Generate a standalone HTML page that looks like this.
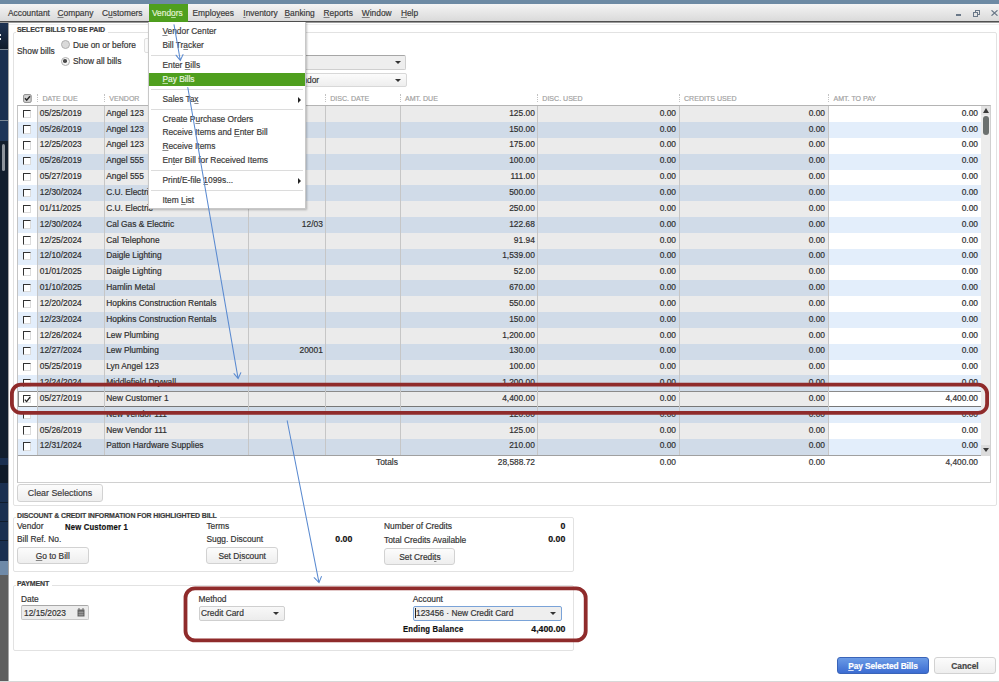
<!DOCTYPE html>
<html><head><meta charset="utf-8">
<style>
*{margin:0;padding:0;box-sizing:border-box;}
html,body{width:999px;height:682px;overflow:hidden;background:#fff;}
body{position:relative;font-family:"Liberation Sans",sans-serif;font-size:8.4px;color:#333;}
span,div{-webkit-text-stroke:0.18px currentColor;}
.a{position:absolute;white-space:nowrap;}
#topband{position:absolute;left:0;top:0;width:999px;height:4px;background:#6d8aa4;}
#menubar{position:absolute;left:0;top:4px;width:999px;height:18px;background:linear-gradient(#f4f4f4,#dadada);border-bottom:1px solid #505050;}
.mi{position:absolute;top:4px;font-size:8.4px;color:#3a3a3a;line-height:10px;white-space:nowrap;}
.u{text-decoration:underline;text-underline-offset:1.2px;text-decoration-thickness:0.5px;text-decoration-color:rgba(60,60,60,0.6);}
#side{position:absolute;left:0;top:23px;width:8.4px;overflow:hidden;height:659px;background:#1b3050;}
.seg{position:absolute;left:0;width:9px;}
.gbox{position:absolute;border:1px solid #e2e2e2;border-radius:2px;}
.legend{position:absolute;font-weight:bold;font-size:7px;color:#3c3c3c;background:#fff;padding:0 3px 0 1px;line-height:9px;white-space:nowrap;letter-spacing:-0.14px;}
#table{position:absolute;left:17px;top:105px;width:974px;height:377.5px;border-top:1px solid #b4b4b4;border-left:1px solid #c4c4c4;border-right:1px solid #d0d0d0;border-bottom:1px solid #d0d0d0;background:#fff;overflow:hidden;}
.row{position:absolute;left:0;width:974px;height:15.84px;}
.row .c{position:absolute;top:0;height:100%;}
.t{position:absolute;top:1.6px;line-height:10px;white-space:nowrap;color:#2e2e2e;}
.t.r{text-align:right;}
.cb{position:absolute;left:5px;top:3.4px;width:8px;height:8.3px;border-top:1.8px solid #333;border-left:1.8px solid #333;border-right:1px solid #dcdcdc;border-bottom:1px solid #dcdcdc;background:#fff;}
.vl{position:absolute;top:0;width:1px;height:349px;background:#c6c6c6;}
.hd{position:absolute;top:94.2px;font-size:7.05px;color:#a2a2a2;line-height:9px;white-space:nowrap;}
.hsep{position:absolute;top:94.3px;width:1px;height:8px;border-left:1px dotted #c2c2c2;}
.btn{position:absolute;border:1px solid #d2d2d2;border-radius:3px;background:linear-gradient(#fcfcfc,#eeeeee);text-align:center;color:#333;line-height:16.5px;white-space:nowrap;}
.lbl{position:absolute;white-space:nowrap;color:#333;line-height:10px;}
.b{font-weight:bold;color:#111;font-size:8.4px;}
.bs{display:inline-block;transform:scaleX(0.92);transform-origin:0 0;letter-spacing:0.2px;}
.bn{font-size:8.8px;letter-spacing:0;}
#menu{position:absolute;left:148.4px;top:22px;width:158px;height:187px;background:#fff;border:1px solid #c8c8c8;border-top:none;box-shadow:1px 1px 2px rgba(0,0,0,0.25);}
.mitem{position:absolute;left:13px;line-height:10px;color:#3a3a3a;white-space:nowrap;}
.msep{position:absolute;left:2px;width:152px;height:1px;background:#dcdcdc;}
.arr{position:absolute;left:149px;width:0;height:0;border-left:3px solid #222;border-top:3px solid transparent;border-bottom:3px solid transparent;}
.dd{position:absolute;border:1px solid #cfcfcf;border-radius:2px;background:linear-gradient(#f8f8f8,#ececec);}
.ddarr{position:absolute;width:0;height:0;border-top:3.5px solid #333;border-left:3.5px solid transparent;border-right:3.5px solid transparent;}
.radio{position:absolute;width:9px;height:9px;border-radius:50%;border:1px solid #b0b0b0;background:#dadada;}
</style></head><body>
<div id="topband"></div>
<div id="menubar">
  <span class="mi" style="left:8px">Accountant</span>
  <span class="mi" style="left:57.5px"><span class="u">C</span>ompany</span>
  <span class="mi" style="left:102px">C<span class="u">u</span>stomers</span>
  <div style="position:absolute;left:148.7px;top:0;width:39.6px;height:17.5px;background:#4f9f1e"></div>
  <span class="mi" style="left:152px;color:#e3f3d6">Vend<span class="u" style="text-decoration-color:rgba(230,245,220,0.7)">o</span>rs</span>
  <span class="mi" style="left:192.5px">Emplo<span class="u">y</span>ees</span>
  <span class="mi" style="left:243.3px"><span class="u">I</span>nventory</span>
  <span class="mi" style="left:284.5px"><span class="u">B</span>anking</span>
  <span class="mi" style="left:323.5px"><span class="u">R</span>eports</span>
  <span class="mi" style="left:361.8px"><span class="u">W</span>indow</span>
  <span class="mi" style="left:400.9px"><span class="u">H</span>elp</span>
  <div style="position:absolute;left:956px;top:10.4px;width:4.5px;height:1.5px;background:#6a7888"></div>
  <svg style="position:absolute;left:972.5px;top:5.5px" width="7" height="7" viewBox="0 0 7 7"><rect x="2.5" y="0.5" width="4" height="4" fill="none" stroke="#6a7888" stroke-width="1"/><rect x="0.5" y="2.5" width="4" height="4" fill="#e4e4e4" stroke="#6a7888" stroke-width="1"/></svg>
  <svg style="position:absolute;left:991px;top:6px" width="7" height="6" viewBox="0 0 7 6"><path d="M0.5 0.3L6.5 5.7M6.5 0.3L0.5 5.7" stroke="#6a7888" stroke-width="1.2"/></svg>
</div>
<div style="position:absolute;left:0;top:22px;width:999px;height:0.8px;background:#9a9a9a"></div><div style="position:absolute;left:0;top:24px;width:999px;height:1px;background:#f0f0f0"></div>
<div id="side">
<div class="seg" style="top:0.5px;height:25.5px;background:linear-gradient(#1e3353,#0f1b2b)"></div>
<div class="seg" style="top:26px;height:1px;background:#7a8794"></div>
<div class="seg" style="top:27px;height:70px;background:#1b3050"></div>
<div class="seg" style="top:97px;height:1px;background:#7a8794"></div>
<div class="seg" style="top:98px;height:20px;background:#1f3658"></div>
<div class="seg" style="top:118px;height:317px;background:#131f2e"></div>
<div class="seg" style="top:435px;height:7px;background:#1b3050"></div>
<div class="seg" style="top:442px;height:18px;background:#0f1a28"></div>
<div class="seg" style="top:460px;height:19px;background:#1b3050"></div>
<div class="seg" style="top:479px;height:1px;background:#111c2c"></div>
<div class="seg" style="top:480px;height:18px;background:#1b3050"></div>
<div class="seg" style="top:498px;height:1px;background:#111c2c"></div>
<div class="seg" style="top:499px;height:18px;background:#1b3050"></div>
<div class="seg" style="top:517px;height:1px;background:#111c2c"></div>
<div class="seg" style="top:518px;height:20px;background:#1b3050"></div>
<div class="seg" style="top:538px;height:14px;background:#6f8aa8"></div>
<div class="seg" style="top:552px;height:107px;background:#5e5e5e"></div>
<div class="seg" style="left:2px;width:3px;top:121px;height:27px;border-radius:2px;background:#8d949c"></div>
<div class="seg" style="left:0;width:1.3px;top:10.6px;height:2px;background:#e8ecf0"></div>
<div class="seg" style="left:0;width:1.3px;top:15px;height:2px;background:#e8ecf0"></div>
</div>
<div style="position:absolute;left:8.4px;top:23px;width:0.8px;height:658px;background:rgba(0,0,0,0.35)"></div>

<!-- group box 1 -->
<div class="gbox" style="left:13px;top:32px;width:984px;height:474px;"></div>
<span class="legend" style="left:16px;top:25.4px;">SELECT BILLS TO BE PAID</span>
<span class="lbl" style="left:17px;top:46px;">Show bills</span>
<div class="radio" style="left:60.5px;top:40px"></div>
<span class="lbl" style="left:73px;top:39.6px;">Due on or before</span>
<div class="radio" style="left:60.5px;top:56.5px;background:#f4f4f4"><div style="position:absolute;left:1.75px;top:1.75px;width:3.5px;height:3.5px;border-radius:50%;background:#4a4a4a"></div></div>
<span class="lbl" style="left:73px;top:56px;">Show all bills</span>
<div class="dd" style="left:144.2px;top:38.2px;width:80px;height:15.3px;border-color:#e0e0e0;background:#fafafa"></div>
<div class="dd" style="left:230px;top:55.2px;width:176px;height:14.5px;background:#eeeeee;border-color:#cfcfcf;border-top:1.5px solid #a6a6a6"></div>
<div class="ddarr" style="left:394.5px;top:61px"></div>
<div class="dd" style="left:230px;top:73px;width:176.5px;height:14.2px;border-color:#d8d8d8;background:linear-gradient(#fbfbfb,#eeeeee)"></div>
<span class="lbl" style="left:292.6px;top:75px;">Vendor</span>
<div class="ddarr" style="left:394.5px;top:78.5px"></div>

<div class="hsep" style="left:37.0px"></div>
<span class="hd" style="left:42.5px">DATE DUE</span>
<div class="hsep" style="left:103.8px"></div>
<span class="hd" style="left:109.3px">VENDOR</span>
<div class="hsep" style="left:324.7px"></div>
<span class="hd" style="left:330.2px">DISC. DATE</span>
<div class="hsep" style="left:399.5px"></div>
<span class="hd" style="left:405.0px">AMT. DUE</span>
<div class="hsep" style="left:536.8px"></div>
<span class="hd" style="left:542.3px">DISC. USED</span>
<div class="hsep" style="left:678.5px"></div>
<span class="hd" style="left:684.0px">CREDITS USED</span>
<div class="hsep" style="left:828.0px"></div>
<span class="hd" style="left:833.5px">AMT. TO PAY</span>
<svg style="position:absolute;left:23.3px;top:93.7px" width="9" height="9" viewBox="0 0 9 9"><rect x="0.6" y="0.6" width="7.6" height="7.8" rx="1.3" fill="#d4d4d4" stroke="#8c8c8c" stroke-width="1"/><path d="M2 4.3L3.7 6.2L7 2.3" fill="none" stroke="#2a2a2a" stroke-width="1.5"/></svg>

<div id="table">
<div class="row" style="top:0.20px;">
<div class="c" style="left:0;width:19.5px;background:#ffffff"><span class="cb"></span></div>
<div class="c" style="left:19.5px;width:791.0px;background:#ebebeb"></div>
<div class="c" style="left:810.5px;width:153.0px;background:#ffffff"></div>
<span class="t" style="left:21.8px">05/25/2019</span>
<span class="t" style="left:88.2px">Angel 123</span>
<span class="t r" style="left:0;width:516.8px">125.00</span>
<span class="t r" style="left:0;width:658.0px">0.00</span>
<span class="t r" style="left:0;width:807.0px">0.00</span>
<span class="t r" style="left:0;width:960.0px">0.00</span>
</div>
<div class="row" style="top:16.04px;">
<div class="c" style="left:0;width:19.5px;background:#e3eefb"><span class="cb"></span></div>
<div class="c" style="left:19.5px;width:791.0px;background:#d0dbe8"></div>
<div class="c" style="left:810.5px;width:153.0px;background:#e3eefb"></div>
<span class="t" style="left:21.8px">05/26/2019</span>
<span class="t" style="left:88.2px">Angel 123</span>
<span class="t r" style="left:0;width:516.8px">150.00</span>
<span class="t r" style="left:0;width:658.0px">0.00</span>
<span class="t r" style="left:0;width:807.0px">0.00</span>
<span class="t r" style="left:0;width:960.0px">0.00</span>
</div>
<div class="row" style="top:31.88px;">
<div class="c" style="left:0;width:19.5px;background:#ffffff"><span class="cb"></span></div>
<div class="c" style="left:19.5px;width:791.0px;background:#ebebeb"></div>
<div class="c" style="left:810.5px;width:153.0px;background:#ffffff"></div>
<span class="t" style="left:21.8px">12/25/2023</span>
<span class="t" style="left:88.2px">Angel 123</span>
<span class="t r" style="left:0;width:516.8px">175.00</span>
<span class="t r" style="left:0;width:658.0px">0.00</span>
<span class="t r" style="left:0;width:807.0px">0.00</span>
<span class="t r" style="left:0;width:960.0px">0.00</span>
</div>
<div class="row" style="top:47.72px;">
<div class="c" style="left:0;width:19.5px;background:#e3eefb"><span class="cb"></span></div>
<div class="c" style="left:19.5px;width:791.0px;background:#d0dbe8"></div>
<div class="c" style="left:810.5px;width:153.0px;background:#e3eefb"></div>
<span class="t" style="left:21.8px">05/26/2019</span>
<span class="t" style="left:88.2px">Angel 555</span>
<span class="t r" style="left:0;width:516.8px">100.00</span>
<span class="t r" style="left:0;width:658.0px">0.00</span>
<span class="t r" style="left:0;width:807.0px">0.00</span>
<span class="t r" style="left:0;width:960.0px">0.00</span>
</div>
<div class="row" style="top:63.56px;">
<div class="c" style="left:0;width:19.5px;background:#ffffff"><span class="cb"></span></div>
<div class="c" style="left:19.5px;width:791.0px;background:#ebebeb"></div>
<div class="c" style="left:810.5px;width:153.0px;background:#ffffff"></div>
<span class="t" style="left:21.8px">05/27/2019</span>
<span class="t" style="left:88.2px">Angel 555</span>
<span class="t r" style="left:0;width:516.8px">111.00</span>
<span class="t r" style="left:0;width:658.0px">0.00</span>
<span class="t r" style="left:0;width:807.0px">0.00</span>
<span class="t r" style="left:0;width:960.0px">0.00</span>
</div>
<div class="row" style="top:79.40px;">
<div class="c" style="left:0;width:19.5px;background:#e3eefb"><span class="cb"></span></div>
<div class="c" style="left:19.5px;width:791.0px;background:#d0dbe8"></div>
<div class="c" style="left:810.5px;width:153.0px;background:#e3eefb"></div>
<span class="t" style="left:21.8px">12/30/2024</span>
<span class="t" style="left:88.2px">C.U. Electric</span>
<span class="t r" style="left:0;width:516.8px">500.00</span>
<span class="t r" style="left:0;width:658.0px">0.00</span>
<span class="t r" style="left:0;width:807.0px">0.00</span>
<span class="t r" style="left:0;width:960.0px">0.00</span>
</div>
<div class="row" style="top:95.24px;">
<div class="c" style="left:0;width:19.5px;background:#ffffff"><span class="cb"></span></div>
<div class="c" style="left:19.5px;width:791.0px;background:#ebebeb"></div>
<div class="c" style="left:810.5px;width:153.0px;background:#ffffff"></div>
<span class="t" style="left:21.8px">01/11/2025</span>
<span class="t" style="left:88.2px">C.U. Electric</span>
<span class="t r" style="left:0;width:516.8px">250.00</span>
<span class="t r" style="left:0;width:658.0px">0.00</span>
<span class="t r" style="left:0;width:807.0px">0.00</span>
<span class="t r" style="left:0;width:960.0px">0.00</span>
</div>
<div class="row" style="top:111.08px;">
<div class="c" style="left:0;width:19.5px;background:#e3eefb"><span class="cb"></span></div>
<div class="c" style="left:19.5px;width:791.0px;background:#d0dbe8"></div>
<div class="c" style="left:810.5px;width:153.0px;background:#e3eefb"></div>
<span class="t" style="left:21.8px">12/30/2024</span>
<span class="t" style="left:88.2px">Cal Gas &amp; Electric</span>
<span class="t r" style="left:0;width:304.8px">12/03</span>
<span class="t r" style="left:0;width:516.8px">122.68</span>
<span class="t r" style="left:0;width:658.0px">0.00</span>
<span class="t r" style="left:0;width:807.0px">0.00</span>
<span class="t r" style="left:0;width:960.0px">0.00</span>
</div>
<div class="row" style="top:126.92px;">
<div class="c" style="left:0;width:19.5px;background:#ffffff"><span class="cb"></span></div>
<div class="c" style="left:19.5px;width:791.0px;background:#ebebeb"></div>
<div class="c" style="left:810.5px;width:153.0px;background:#ffffff"></div>
<span class="t" style="left:21.8px">12/25/2024</span>
<span class="t" style="left:88.2px">Cal Telephone</span>
<span class="t r" style="left:0;width:516.8px">91.94</span>
<span class="t r" style="left:0;width:658.0px">0.00</span>
<span class="t r" style="left:0;width:807.0px">0.00</span>
<span class="t r" style="left:0;width:960.0px">0.00</span>
</div>
<div class="row" style="top:142.76px;">
<div class="c" style="left:0;width:19.5px;background:#e3eefb"><span class="cb"></span></div>
<div class="c" style="left:19.5px;width:791.0px;background:#d0dbe8"></div>
<div class="c" style="left:810.5px;width:153.0px;background:#e3eefb"></div>
<span class="t" style="left:21.8px">12/10/2024</span>
<span class="t" style="left:88.2px">Daigle Lighting</span>
<span class="t r" style="left:0;width:516.8px">1,539.00</span>
<span class="t r" style="left:0;width:658.0px">0.00</span>
<span class="t r" style="left:0;width:807.0px">0.00</span>
<span class="t r" style="left:0;width:960.0px">0.00</span>
</div>
<div class="row" style="top:158.60px;">
<div class="c" style="left:0;width:19.5px;background:#ffffff"><span class="cb"></span></div>
<div class="c" style="left:19.5px;width:791.0px;background:#ebebeb"></div>
<div class="c" style="left:810.5px;width:153.0px;background:#ffffff"></div>
<span class="t" style="left:21.8px">01/01/2025</span>
<span class="t" style="left:88.2px">Daigle Lighting</span>
<span class="t r" style="left:0;width:516.8px">52.00</span>
<span class="t r" style="left:0;width:658.0px">0.00</span>
<span class="t r" style="left:0;width:807.0px">0.00</span>
<span class="t r" style="left:0;width:960.0px">0.00</span>
</div>
<div class="row" style="top:174.44px;">
<div class="c" style="left:0;width:19.5px;background:#e3eefb"><span class="cb"></span></div>
<div class="c" style="left:19.5px;width:791.0px;background:#d0dbe8"></div>
<div class="c" style="left:810.5px;width:153.0px;background:#e3eefb"></div>
<span class="t" style="left:21.8px">01/10/2025</span>
<span class="t" style="left:88.2px">Hamlin Metal</span>
<span class="t r" style="left:0;width:516.8px">670.00</span>
<span class="t r" style="left:0;width:658.0px">0.00</span>
<span class="t r" style="left:0;width:807.0px">0.00</span>
<span class="t r" style="left:0;width:960.0px">0.00</span>
</div>
<div class="row" style="top:190.28px;">
<div class="c" style="left:0;width:19.5px;background:#ffffff"><span class="cb"></span></div>
<div class="c" style="left:19.5px;width:791.0px;background:#ebebeb"></div>
<div class="c" style="left:810.5px;width:153.0px;background:#ffffff"></div>
<span class="t" style="left:21.8px">12/20/2024</span>
<span class="t" style="left:88.2px">Hopkins Construction Rentals</span>
<span class="t r" style="left:0;width:516.8px">550.00</span>
<span class="t r" style="left:0;width:658.0px">0.00</span>
<span class="t r" style="left:0;width:807.0px">0.00</span>
<span class="t r" style="left:0;width:960.0px">0.00</span>
</div>
<div class="row" style="top:206.12px;">
<div class="c" style="left:0;width:19.5px;background:#e3eefb"><span class="cb"></span></div>
<div class="c" style="left:19.5px;width:791.0px;background:#d0dbe8"></div>
<div class="c" style="left:810.5px;width:153.0px;background:#e3eefb"></div>
<span class="t" style="left:21.8px">12/23/2024</span>
<span class="t" style="left:88.2px">Hopkins Construction Rentals</span>
<span class="t r" style="left:0;width:516.8px">150.00</span>
<span class="t r" style="left:0;width:658.0px">0.00</span>
<span class="t r" style="left:0;width:807.0px">0.00</span>
<span class="t r" style="left:0;width:960.0px">0.00</span>
</div>
<div class="row" style="top:221.96px;">
<div class="c" style="left:0;width:19.5px;background:#ffffff"><span class="cb"></span></div>
<div class="c" style="left:19.5px;width:791.0px;background:#ebebeb"></div>
<div class="c" style="left:810.5px;width:153.0px;background:#ffffff"></div>
<span class="t" style="left:21.8px">12/26/2024</span>
<span class="t" style="left:88.2px">Lew Plumbing</span>
<span class="t r" style="left:0;width:516.8px">1,200.00</span>
<span class="t r" style="left:0;width:658.0px">0.00</span>
<span class="t r" style="left:0;width:807.0px">0.00</span>
<span class="t r" style="left:0;width:960.0px">0.00</span>
</div>
<div class="row" style="top:237.80px;">
<div class="c" style="left:0;width:19.5px;background:#e3eefb"><span class="cb"></span></div>
<div class="c" style="left:19.5px;width:791.0px;background:#d0dbe8"></div>
<div class="c" style="left:810.5px;width:153.0px;background:#e3eefb"></div>
<span class="t" style="left:21.8px">12/27/2024</span>
<span class="t" style="left:88.2px">Lew Plumbing</span>
<span class="t r" style="left:0;width:304.8px">20001</span>
<span class="t r" style="left:0;width:516.8px">130.00</span>
<span class="t r" style="left:0;width:658.0px">0.00</span>
<span class="t r" style="left:0;width:807.0px">0.00</span>
<span class="t r" style="left:0;width:960.0px">0.00</span>
</div>
<div class="row" style="top:253.64px;">
<div class="c" style="left:0;width:19.5px;background:#ffffff"><span class="cb"></span></div>
<div class="c" style="left:19.5px;width:791.0px;background:#ebebeb"></div>
<div class="c" style="left:810.5px;width:153.0px;background:#ffffff"></div>
<span class="t" style="left:21.8px">05/25/2019</span>
<span class="t" style="left:88.2px">Lyn Angel 123</span>
<span class="t r" style="left:0;width:516.8px">100.00</span>
<span class="t r" style="left:0;width:658.0px">0.00</span>
<span class="t r" style="left:0;width:807.0px">0.00</span>
<span class="t r" style="left:0;width:960.0px">0.00</span>
</div>
<div class="row" style="top:269.48px;">
<div class="c" style="left:0;width:19.5px;background:#e3eefb"><span class="cb"></span></div>
<div class="c" style="left:19.5px;width:791.0px;background:#d0dbe8"></div>
<div class="c" style="left:810.5px;width:153.0px;background:#e3eefb"></div>
<span class="t" style="left:21.8px">12/24/2024</span>
<span class="t" style="left:88.2px">Middlefield Drywall</span>
<span class="t r" style="left:0;width:516.8px">1,200.00</span>
<span class="t r" style="left:0;width:658.0px">0.00</span>
<span class="t r" style="left:0;width:807.0px">0.00</span>
<span class="t r" style="left:0;width:960.0px">0.00</span>
</div>
<div class="row" style="top:285.32px;">
<div class="c" style="left:0;width:19.5px;background:#ffffff"><span class="cb on"></span></div>
<div class="c" style="left:19.5px;width:791.0px;background:#ebebeb"></div>
<div class="c" style="left:810.5px;width:153.0px;background:#ffffff"></div>
<span class="t" style="left:21.8px">05/27/2019</span>
<span class="t" style="left:88.2px">New Customer 1</span>
<span class="t r" style="left:0;width:516.8px">4,400.00</span>
<span class="t r" style="left:0;width:658.0px">0.00</span>
<span class="t r" style="left:0;width:807.0px">0.00</span>
<span class="t r" style="left:0;width:960.0px">4,400.00</span>
<div style="position:absolute;left:0;top:0;width:964px;height:15.84px;border:1px solid #8a8a8a;border-bottom-color:#777"></div>
<svg style="position:absolute;left:6px;top:4.5px" width="7" height="7" viewBox="0 0 7 7"><path d="M0.8 3.6L2.6 5.6L6.2 1" fill="none" stroke="#222" stroke-width="1.3"/></svg>
</div>
<div class="row" style="top:301.16px;">
<div class="c" style="left:0;width:19.5px;background:#e3eefb"><span class="cb"></span></div>
<div class="c" style="left:19.5px;width:791.0px;background:#d0dbe8"></div>
<div class="c" style="left:810.5px;width:153.0px;background:#e3eefb"></div>
<span class="t" style="left:21.8px"></span>
<span class="t" style="left:88.2px">New Vendor 111</span>
<span class="t r" style="left:0;width:516.8px">120.00</span>
<span class="t r" style="left:0;width:658.0px">0.00</span>
<span class="t r" style="left:0;width:807.0px">0.00</span>
<span class="t r" style="left:0;width:960.0px">0.00</span>
</div>
<div class="row" style="top:317.00px;">
<div class="c" style="left:0;width:19.5px;background:#ffffff"><span class="cb"></span></div>
<div class="c" style="left:19.5px;width:791.0px;background:#ebebeb"></div>
<div class="c" style="left:810.5px;width:153.0px;background:#ffffff"></div>
<span class="t" style="left:21.8px">05/26/2019</span>
<span class="t" style="left:88.2px">New Vendor 111</span>
<span class="t r" style="left:0;width:516.8px">125.00</span>
<span class="t r" style="left:0;width:658.0px">0.00</span>
<span class="t r" style="left:0;width:807.0px">0.00</span>
<span class="t r" style="left:0;width:960.0px">0.00</span>
</div>
<div class="row" style="top:332.84px;">
<div class="c" style="left:0;width:19.5px;background:#e3eefb"><span class="cb"></span></div>
<div class="c" style="left:19.5px;width:791.0px;background:#d0dbe8"></div>
<div class="c" style="left:810.5px;width:153.0px;background:#e3eefb"></div>
<span class="t" style="left:21.8px">12/31/2024</span>
<span class="t" style="left:88.2px">Patton Hardware Supplies</span>
<span class="t r" style="left:0;width:516.8px">210.00</span>
<span class="t r" style="left:0;width:658.0px">0.00</span>
<span class="t r" style="left:0;width:807.0px">0.00</span>
<span class="t r" style="left:0;width:960.0px">0.00</span>
</div>
<div class="vl" style="left:19.0px"></div>
<div class="vl" style="left:85.8px"></div>
<div class="vl" style="left:230.0px"></div>
<div class="vl" style="left:306.7px"></div>
<div class="vl" style="left:381.5px"></div>
<div class="vl" style="left:518.8px"></div>
<div class="vl" style="left:660.5px"></div>
<div class="vl" style="left:810.0px"></div>
<div style="position:absolute;left:0;top:348.9px;width:964px;height:1px;background:#a0a0a0"></div>
</div>
<!-- scrollbar -->
<div style="position:absolute;left:981px;top:106px;width:9.4px;height:349.5px;background:#ececec;"></div>
<div style="position:absolute;left:981px;top:106px;width:9.4px;height:9px;background:#e2e2e2;"></div>
<div style="position:absolute;left:981px;top:445px;width:9.4px;height:10.5px;background:#dcdcdc;"></div>
<div style="position:absolute;left:982.6px;top:107.8px;width:0;height:0;border-bottom:5px solid #3a3a3a;border-left:3.3px solid transparent;border-right:3.3px solid transparent"></div>
<div style="position:absolute;left:983.3px;top:116.2px;width:6px;height:19.3px;border-radius:3px;background:#6b706f"></div>
<div style="position:absolute;left:982.6px;top:447.6px;width:0;height:0;border-top:4.8px solid #3a3a3a;border-left:3.3px solid transparent;border-right:3.3px solid transparent"></div>

<span class="lbl" style="left:376px;top:457px;">Totals</span>
<span class="lbl" style="left:400px;width:135px;text-align:right;top:457px;">28,588.72</span>
<span class="lbl" style="left:537px;width:139px;text-align:right;top:457px;">0.00</span>
<span class="lbl" style="left:679px;width:146px;text-align:right;top:457px;">0.00</span>
<span class="lbl" style="left:828px;width:150px;text-align:right;top:457px;">4,400.00</span>

<div class="btn" style="left:17px;top:484.4px;width:86px;height:17.2px;font-size:8.85px;color:#3c3c3c">Clear Selections</div>

<!-- group box 2 -->
<div class="gbox" style="left:13px;top:517px;width:561px;height:55px;"></div>
<span class="legend" style="left:16px;top:510.6px;">DISCOUNT &amp; CREDIT INFORMATION FOR HIGHLIGHTED BILL</span>
<span class="lbl" style="left:17px;top:521px;">Vendor</span>
<span class="lbl b" style="left:65px;top:521.7px;"><span class="bs">New Customer 1</span></span>
<span class="lbl" style="left:17px;top:534px;">Bill Ref. No.</span>
<div class="btn" style="left:17px;top:547.4px;width:71.6px;height:17px;"><span class="u">G</span>o to Bill</div>
<span class="lbl" style="left:206.4px;top:521px;">Terms</span>
<span class="lbl" style="left:206.4px;top:534px;">Sugg. Discount</span>
<span class="lbl b bn" style="left:300px;width:52.4px;text-align:right;top:533.8px;">0.00</span>
<div class="btn" style="left:206.4px;top:547.2px;width:71.5px;height:17.3px;">Set D<span class="u">i</span>scount</div>
<span class="lbl" style="left:384px;top:521px;">Number of Credits</span>
<span class="lbl b bn" style="left:520px;width:45.3px;text-align:right;top:520.8px;">0</span>
<span class="lbl" style="left:384px;top:534.5px;">Total Credits Available</span>
<span class="lbl b bn" style="left:520px;width:45.3px;text-align:right;top:534.3px;">0.00</span>
<div class="btn" style="left:384.3px;top:547.5px;width:71.2px;height:17px;">Set Credi<span class="u">t</span>s</div>

<!-- group box 3 -->
<div class="gbox" style="left:13px;top:585px;width:561px;height:66px;"></div>
<span class="legend" style="left:16px;top:578.6px;">PAYMENT</span>
<span class="lbl" style="left:21px;top:593.5px;">Date</span>
<div class="dd" style="left:21px;top:605.4px;width:67.6px;height:15px;background:#ececec;border-color:#c8c8c8;border-top-color:#a8a8a8"></div>
<span class="lbl" style="left:24px;top:608px;">12/15/2023</span>
<svg style="position:absolute;left:77px;top:608px" width="8" height="9" viewBox="0 0 8 9"><rect x="0.5" y="1.5" width="7" height="7" fill="#666"/><rect x="1.5" y="0" width="1" height="2" fill="#666"/><rect x="5.5" y="0" width="1" height="2" fill="#666"/><path d="M1.5 4.5h5M1.5 6.5h5M3 3v5M5 3v5" stroke="#aaa" stroke-width="0.6"/></svg>
<span class="lbl" style="left:198.6px;top:593.5px;">Method</span>
<div class="dd" style="left:198.6px;top:605.5px;width:86px;height:15px;"></div>
<span class="lbl" style="left:201px;top:608px;">Credit Card</span>
<div class="ddarr" style="left:272.5px;top:611.5px"></div>
<span class="lbl" style="left:412.7px;top:593.5px;">Account</span>
<div class="dd" style="left:412.5px;top:605.6px;width:149.2px;height:15px;border-color:#7aa3d8;background:#eeeeee"></div>
<div style="position:absolute;left:415px;top:608px;width:1px;height:10px;background:#222"></div>
<span class="lbl" style="left:416px;top:608px;">123456 · New Credit Card</span>
<div class="ddarr" style="left:550px;top:611.5px"></div>
<span class="lbl b" style="left:403px;top:624px;"><span class="bs">Ending Balance</span></span>
<span class="lbl b bn" style="left:500px;width:65.5px;text-align:right;top:623.5px;">4,400.00</span>

<div class="btn" style="left:837px;top:657.4px;width:92px;height:17px;background:linear-gradient(#5d90e2,#3d6ed0);border-color:#3a64b8;color:#fff;font-weight:bold;letter-spacing:-0.12px;background:linear-gradient(#6b9be6,#3c6cd2);"><span class="u" style="text-decoration-color:rgba(255,255,255,0.8)">P</span>ay Selected Bills</div>
<div class="btn" style="left:934.3px;top:657.4px;width:61.3px;height:17px;font-weight:bold;color:#444">Cancel</div>
<div style="position:absolute;left:0;top:681px;width:999px;height:1px;background:#d8d8d8"></div>

<div id="menu">
<div style="position:absolute;left:0;top:50.5px;width:156px;height:13.2px;background:#4f9f1e"></div>
<span class="mitem" style="top:3.5px;color:#3a3a3a"><span class="u">V</span>endor Center</span>
<span class="mitem" style="top:17.5px;color:#3a3a3a">Bill Tr<span class="u">a</span>cker</span>
<span class="mitem" style="top:37.5px;color:#3a3a3a">Enter <span class="u">B</span>ills</span>
<span class="mitem" style="top:51.5px;color:#eaf6e2"><span class="u" style="text-decoration-color:rgba(230,245,220,0.7)">P</span>ay Bills</span>
<span class="mitem" style="top:71.8px;color:#3a3a3a">Sales Ta<span class="u">x</span></span>
<div class="arr" style="top:74.8px"></div>
<span class="mitem" style="top:91.8px;color:#3a3a3a">Create P<span class="u">u</span>rchase Orders</span>
<span class="mitem" style="top:105.1px;color:#3a3a3a">Receive Items and <span class="u">E</span>nter Bill</span>
<span class="mitem" style="top:118.8px;color:#3a3a3a"><span class="u">R</span>eceive Items</span>
<span class="mitem" style="top:132.7px;color:#3a3a3a">En<span class="u">t</span>er Bill for Received Items</span>
<span class="mitem" style="top:152.7px;color:#3a3a3a">Print/E-file <span class="u">1</span>099s...</span>
<div class="arr" style="top:155.7px"></div>
<span class="mitem" style="top:172.7px;color:#3a3a3a">Item <span class="u">L</span>ist</span>
<div class="msep" style="top:33.2px"></div>
<div class="msep" style="top:67.2px"></div>
<div class="msep" style="top:87.2px"></div>
<div class="msep" style="top:148.3px"></div>
<div class="msep" style="top:168.3px"></div>
</div>

<svg style="position:absolute;left:0;top:0" width="999" height="682">
 <g fill="none" stroke="#8f2b2b" stroke-width="3.8">
  <rect x="11.9" y="384.7" width="975.2" height="28.2" rx="9"/>
  <rect x="185.5" y="588.4" width="400.2" height="52" rx="9.5"/>
 </g>
 <g fill="none" stroke="#5a8ad0" stroke-width="1.05" stroke-linecap="round">
  <path d="M174 24.7L180.3 60.5M176 55.2L180.3 60.5L183 54.6"/>
  <path d="M187.8 87.5L238.1 378.6M234 373.7L238.1 378.6L240.8 372.8"/>
  <path d="M287.2 420.75L319 582.6M314.2 577.7L319 582.6L321.4 576.6"/>
 </g>
</svg>
</body></html>
